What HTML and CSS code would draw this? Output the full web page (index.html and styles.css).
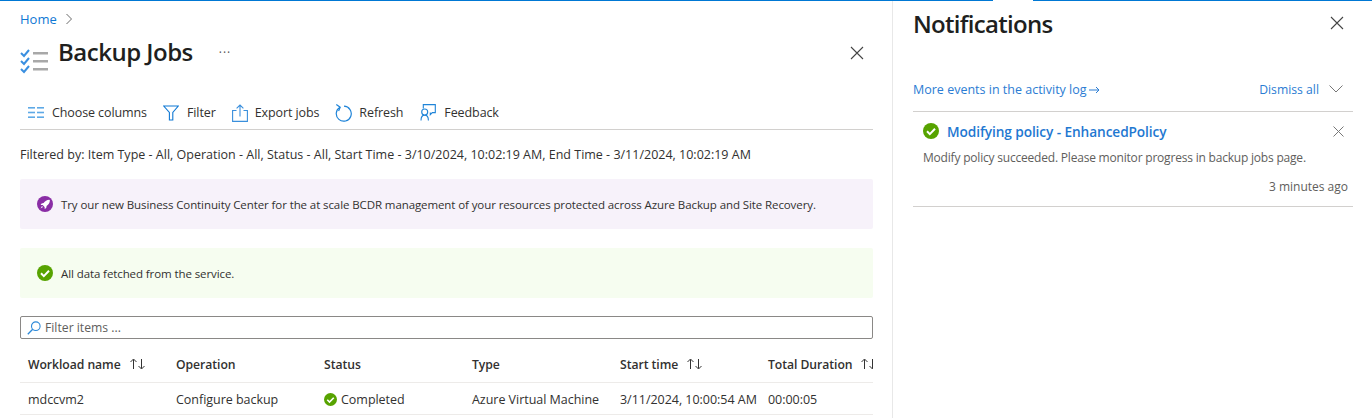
FILE: index.html
```html
<!DOCTYPE html>
<html lang="en">
<head>
<meta charset="utf-8">
<title>Backup Jobs</title>
<link rel="stylesheet" href="styles.css">
</head>
<body>
<div class="topbar"><span class="bar-a"></span><span class="bar-gap"></span><span class="bar-b"></span></div>
<div class="app">
  <main class="blade">
    <nav class="crumbs"><a class="link">Home</a>
      <svg class="crumb-chev" width="8" height="12" viewBox="0 0 8 12"><path d="M1.5 1l5 5-5 5" fill="none" stroke="#6b6b6b"/></svg></nav>
    <header class="head">
      <svg class="head-icon" width="30" height="26" viewBox="0 0 30 26">
        <g fill="none" stroke="#3a8fe0" stroke-width="2"><path d="M1 5l3 3 5-6"/><path d="M1 13l3 3 5-6"/><path d="M1 21l3 3 5-6"/></g>
        <g fill="#a8a8a8"><rect x="13" y="4" width="15" height="2.5"/><rect x="13" y="12" width="15" height="2.5"/><rect x="13" y="20" width="15" height="2.5"/></g>
      </svg>
      <h1 class="title">Backup Jobs</h1>
      <span class="more">···</span>
      <svg class="close head-close" width="14" height="14" viewBox="0 0 14 14"><path d="M1 1l12 12M13 1L1 13" stroke="#444" stroke-width="1.1"/></svg>
    </header>
    <div class="toolbar">
      <span class="tool">
        <svg width="16" height="11" viewBox="0 0 16 11"><g fill="#5ea9e6"><rect x="0" y="0" width="7" height="1.600"/><rect x="9" y="0" width="7" height="1.600"/><rect x="0" y="4.700" width="7" height="1.600"/><rect x="9" y="4.700" width="7" height="1.600"/><rect x="0" y="9.400" width="7" height="1.600"/><rect x="9" y="9.400" width="7" height="1.600"/></g></svg>Choose columns</span>
      <span class="tool">
        <svg width="16" height="16" viewBox="0 0 16 16"><path d="M.7 1h14.6L9.800 7.500V15H6.400V7.500z" fill="none" stroke="#0f78d4" stroke-width="1.100"/></svg>Filter</span>
      <span class="tool">
        <svg width="16" height="18" class="icon-narrow" viewBox="0 0 16 18"><path d="M4.500 6.500H.6v10.900h14.800V6.500h-3.900M8 12.500V1M4.600 4.400L8 1l3.400 3.400" fill="none" stroke="#3a8fdc" stroke-width="1.100"/></svg>Export jobs</span>
      <span class="tool">
        <svg width="17" height="18" class="icon-narrow" viewBox="0 0 17 18"><path d="M5 3.200A7.500 7.500 0 1 0 9 2.200" fill="none" stroke="#1f84d8" stroke-width="1.200"/><path d="M1.300 .6L5.200 3.300 3.600 7" fill="none" stroke="#1f84d8" stroke-width="1.200"/></svg>Refresh</span>
      <span class="tool">
        <svg width="17" height="17" viewBox="0 0 17 17"><path d="M4.300 4.600V.6h12v8h-3l-2 2v-2M2 16.400c0-4 1.600-5.300 3.700-5.300s3.700 1.300 3.700 5.300" fill="none" stroke="#1f84d8" stroke-width="1.100"/><circle cx="5.700" cy="8" r="3" fill="#fff" stroke="#1f84d8" stroke-width="1.100"/></svg>Feedback</span>
    </div>
    <p class="filterline">Filtered by: Item Type - All, Operation - All, Status - All, Start Time - 3/10/2024, 10:02:19 AM, End Time - 3/11/2024, 10:02:19 AM</p>
    <div class="banner banner-purple">
      <svg class="ban-icon" width="16" height="16" viewBox="0 0 16 16"><circle cx="8" cy="8" r="8" fill="#8a2da5"/><path d="M12.300 3.700c-2.500.1-4.300 1.200-5.700 3.300l-2 .4-1 1.500 2.100.1 1.900 1.900.1 2.100 1.500-1 .4-2c2.100-1.400 3.200-3.200 3.300-5.700z" fill="#fff"/><path d="M5 10l-1.500 2.500L6 11z" fill="#fff"/></svg>
      <span>Try our new Business Continuity Center for the at scale BCDR management of your resources protected across Azure Backup and Site Recovery.</span>
    </div>
    <div class="banner banner-green">
      <svg class="ban-icon" width="16" height="16" viewBox="0 0 16 16"><circle cx="8" cy="8" r="8" fill="#57a300"/><path d="M4 8.300l2.800 2.800L12 5.800" fill="none" stroke="#fff" stroke-width="2"/></svg>
      <span>All data fetched from the service.</span>
    </div>
    <div class="search">
      <svg width="14" height="14" viewBox="0 0 14 14"><circle cx="8.800" cy="5.200" r="4.300" fill="none" stroke="#2b88d8" stroke-width="1.100"/><path d="M5.700 8.300L.8 13.200" stroke="#2b88d8" stroke-width="1.300"/></svg>
      <span>Filter items ...</span>
    </div>
    <div class="table">
      <div class="row row-head">
        <div class="cell">Workload name<svg class="sort" width="18" height="12" viewBox="0 0 18 12"><use href="#sorter"/></svg></div>
        <div class="cell">Operation</div>
        <div class="cell">Status</div>
        <div class="cell">Type</div>
        <div class="cell">Start time<svg class="sort" width="18" height="12" viewBox="0 0 18 12"><use href="#sorter"/></svg></div>
        <div class="cell">Total Duration<svg class="sort" width="18" height="12" viewBox="0 0 18 12"><use href="#sorter"/></svg></div>
      </div>
      <div class="row row-body">
        <div class="cell">mdccvm2</div>
        <div class="cell">Configure backup</div>
        <div class="cell"><svg class="status-icon" width="13" height="13" viewBox="0 0 16 16"><circle cx="8" cy="8" r="8" fill="#57a300"/><path d="M4 8.300l2.800 2.800L12 5.800" fill="none" stroke="#fff" stroke-width="2"/></svg>Completed</div>
        <div class="cell">Azure Virtual Machine</div>
        <div class="cell">3/11/2024, 10:00:54 AM</div>
        <div class="cell">00:00:05</div>
      </div>
    </div>
    <svg class="defs" width="0" height="0"><defs><g id="sorter"><path d="M4.500 11V1.500M1.500 4l3-3 3 3M12.500 1v9.500M9.500 8l3 3 3-3" fill="none" stroke="#333" stroke-width="1"/></g></defs></svg>
  </main>
  <aside class="notes">
    <div class="notes-head">
      <h2 class="notes-title">Notifications</h2>
      <svg class="close" width="14" height="14" viewBox="0 0 14 14"><path d="M1 1l12 12M13 1L1 13" stroke="#444" stroke-width="1.100"/></svg>
    </div>
    <div class="notes-actions">
      <a class="link">More events in the activity log<svg class="arrow" width="11" height="8" viewBox="0 0 11 8"><path d="M0 4h10M7 1l3 3-3 3" fill="none" stroke="#2b7cd3"/></svg></a>
      <span class="dismiss"><a class="link">Dismiss all</a><svg width="14" height="8" viewBox="0 0 14 8"><path d="M.5.500L7 7 13.500.500" fill="none" stroke="#777"/></svg></span>
    </div>
    <article class="note">
      <div class="note-top">
        <svg width="16" height="16" viewBox="0 0 16 16"><circle cx="8" cy="8" r="8" fill="#57a300"/><path d="M4 8.300l2.800 2.800L12 5.800" fill="none" stroke="#fff" stroke-width="2"/></svg>
        <a class="note-title">Modifying policy - EnhancedPolicy</a>
        <svg class="note-close" width="11" height="11" viewBox="0 0 11 11"><path d="M.5.500l10 10M10.500.500l-10 10" stroke="#777"/></svg>
      </div>
      <p class="note-body">Modify policy succeeded. Please monitor progress in backup jobs page.</p>
      <p class="note-time">3 minutes ago</p>
    </article>
  </aside>
</div>
</body>
</html>
```
FILE: styles.css
```css
* { box-sizing: border-box; }
html, body { margin: 0; height: 418px; overflow: hidden; background: #fff; }
body { font-family: "Open Sans", "Noto Sans", sans-serif; font-size: 12.5px; color: #323130; }
.topbar { display: flex; height: 1px; }
.bar-a { width: 993px; background: #0078d4; }
.bar-gap { width: 40px; }
.bar-b { flex: 1; background: #0078d4; }
.app { display: flex; height: 417px; }
.blade { width: 892px; padding: 0 19px 0 20px; overflow: hidden; flex: none; }
.link { color: #0f78d4; }
.crumbs { display: flex; align-items: center; gap: 8px; height: 18px; margin-top: 9px; font-size: 13px; }
.head { display: flex; align-items: flex-start; height: 50px; margin-top: 3px; }
.head-icon { margin-top: 17px; flex: none; }
.title { margin: 4px 0 0 8px; font-size: 24px; line-height: 33px; font-weight: 600; color: #201f1e; letter-spacing: -.5px; }
.more { margin: 12px 0 0 26px; font-size: 12px; color: #555; line-height: 20px; letter-spacing: 1px; }
.head-close { margin: 15px 9px 0 auto; }
.toolbar { display: flex; align-items: center; gap: 16px; height: 36px; margin-top: 13px; padding: 2px 0 0 8px; border-bottom: 1px solid #d2d0ce; }
.tool { display: flex; align-items: center; gap: 8px; font-size: 12.5px; letter-spacing: -.1px; white-space: nowrap; }
.icon-narrow { margin-right: -1px; }
.filterline { margin: 16px 0 15px; font-size: 12.5px; line-height: 18px; white-space: nowrap; }
.banner { display: flex; align-items: center; gap: 8px; height: 50px; padding-left: 17px; font-size: 11.500px; letter-spacing: -.095px; white-space: nowrap; border-radius: 2px; }
.ban-icon { flex: none; }
.banner-purple { background: #f7f2fa; margin-bottom: 19px; }
.banner-green { background: #f6fdf0; margin-bottom: 18px; }
.search { display: flex; align-items: center; gap: 4px; height: 23px; padding-left: 6px; border: 1px solid #8a8886; border-radius: 2px; font-size: 12.2px; color: #605e5c; }
.table { width: 853px; overflow: hidden; margin-top: 9px; }
.row { display: grid; grid-template-columns: repeat(6, 148px); width: 900px; height: 32px; align-items: center; border-bottom: 1px solid #edebe9; }
.row-head { height: 35px; padding-bottom: 2px; }
.row-body { padding-top: 1px; }
.cell { display: flex; align-items: center; padding-left: 8px; white-space: nowrap; font-size: 12.5px; letter-spacing: -.03px; }
.row-head .cell { font-weight: 600; font-size: 12.2px; letter-spacing: -.05px; }
.sort { margin-left: 8px; flex: none; }
.status-icon { margin-right: 4px; }
.defs { position: absolute; }
.notes { width: 480px; border-left: 1px solid #e8e8e8; padding: 0 20px 0 20px; flex: none; }
.notes-head { display: flex; justify-content: space-between; align-items: center; height: 44px; padding-right: 8px; }
.notes-title { margin: 0; font-size: 24px; font-weight: 600; color: #201f1e; letter-spacing: -.7px; }
.notes-actions { display: flex; justify-content: space-between; align-items: center; height: 34px; margin-top: 27px; padding-right: 9px; font-size: 12.5px; }
.notes-actions .link { color: #2b7cd3; }
.arrow { margin-left: 2px; }
.dismiss { display: flex; align-items: center; gap: 10px; font-size: 12.2px; }
.note { border-top: 1px solid #d2d0ce; border-bottom: 1px solid #d2d0ce; margin-top: 5px; height: 96px; padding: 10px 5px 0 10px; width: 440px; }
.note-top { display: flex; align-items: center; gap: 8px; height: 18px; }
.note-title { color: #1f78d1; font-size: 13.7px; font-weight: 600; letter-spacing: -.1px; }
.note-close { margin-left: auto; margin-right: 4px; }
.note-body { margin: 10px 0 0; font-size: 12px; line-height: 16px; color: #605e5c; letter-spacing: -.2px; white-space: nowrap; }
.note-time { margin: 13px 0 0; text-align: right; font-size: 12px; line-height: 16px; color: #605e5c; }
```
